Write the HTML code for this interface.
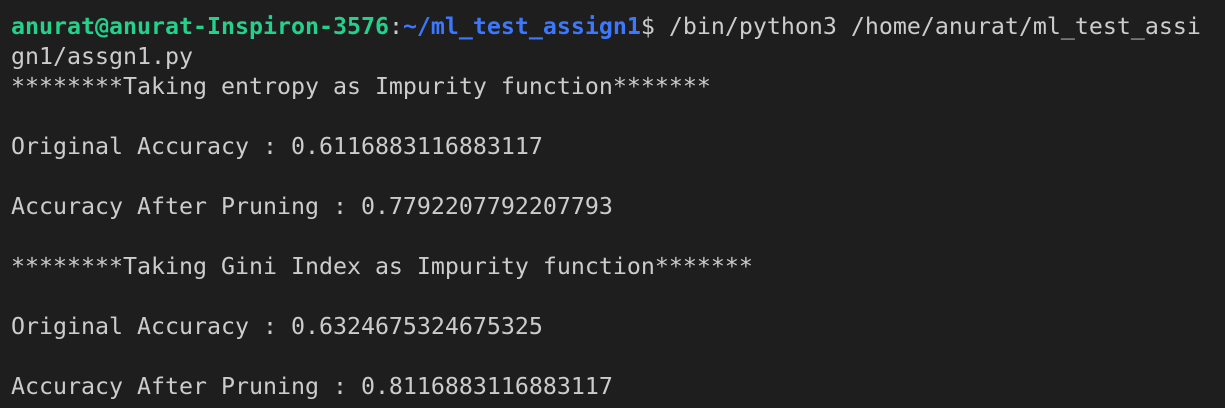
<!DOCTYPE html>
<html><head><style>
html,body{margin:0;padding:0;background:#1e1e1e;width:1225px;height:408px;overflow:hidden}
pre{margin:0;padding:12px 0 0 11px;font-family:"DejaVu Sans Mono","Liberation Mono",monospace;font-size:23.25px;line-height:30px;color:#cccccc;white-space:pre}
.g{color:#23d18b;font-weight:bold}.b{color:#3b78ff;font-weight:bold}
</style></head><body><pre><span class="g">anurat@anurat-Inspiron-3576</span>:<span class="b">~/ml_test_assign1</span>$ /bin/python3 /home/anurat/ml_test_assi
gn1/assgn1.py
********Taking entropy as Impurity function*******

Original Accuracy : 0.6116883116883117

Accuracy After Pruning : 0.7792207792207793

********Taking Gini Index as Impurity function*******

Original Accuracy : 0.6324675324675325

Accuracy After Pruning : 0.8116883116883117</pre></body></html>
